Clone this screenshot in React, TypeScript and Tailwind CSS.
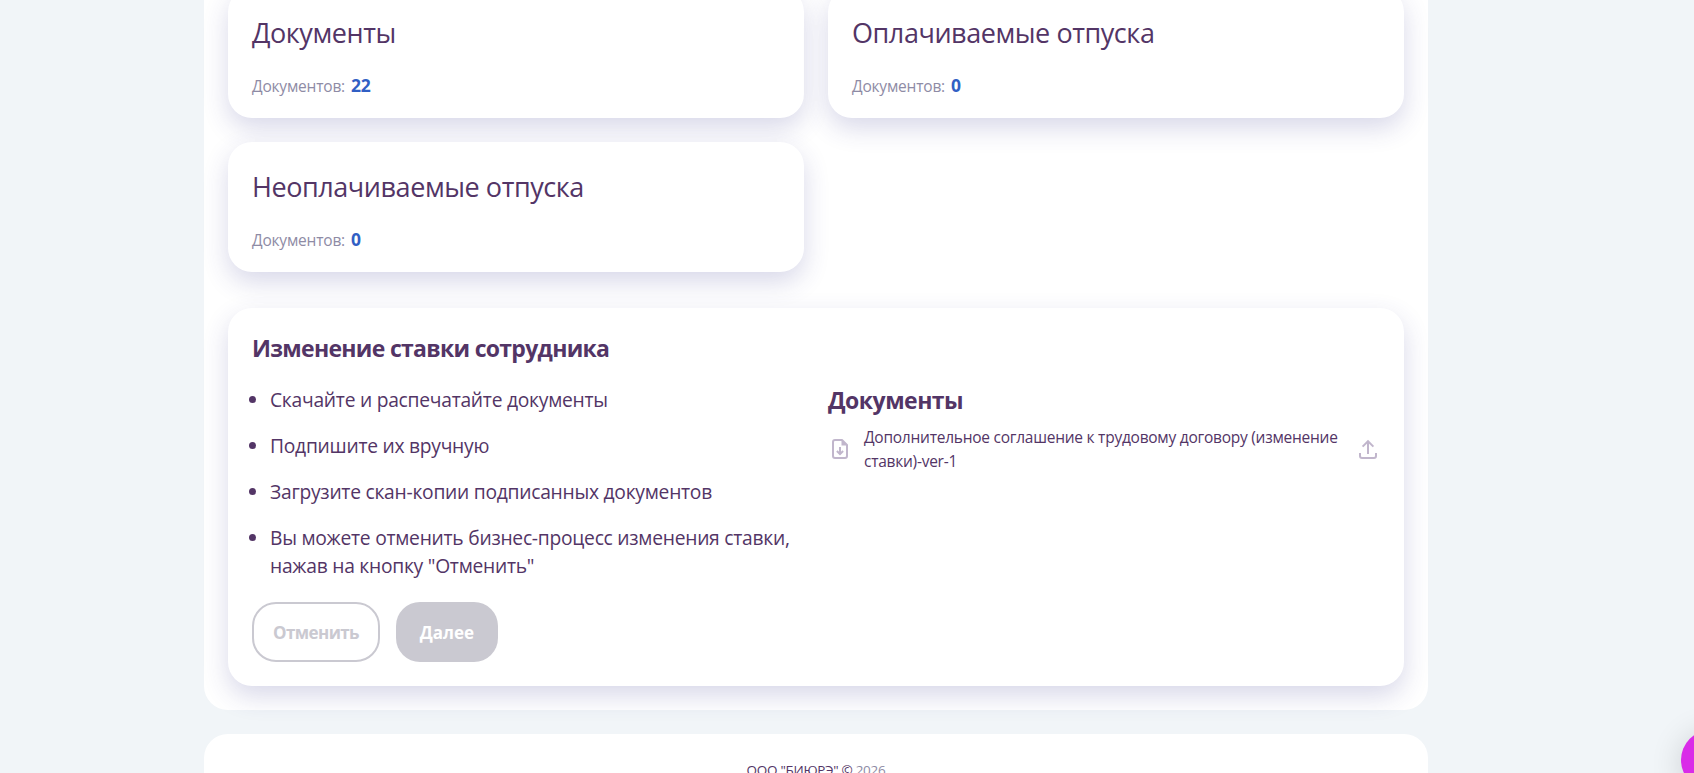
import cx from 'clsx';
import { FC, ReactNode } from 'react';

const categories = [
  { title: 'Документы', count: 22 },
  { title: 'Оплачиваемые отпуска', count: 0 },
  { title: 'Неоплачиваемые отпуска', count: 0 },
];

const steps = [
  'Скачайте и распечатайте документы',
  'Подпишите их вручную',
  'Загрузите скан-копии подписанных документов',
  'Вы можете отменить бизнес-процесс изменения ставки, нажав на кнопку "Отменить"',
];

const DownloadIcon: FC = () => (
  <svg className="shrink-0" width="24" height="24" viewBox="0 0 24 24" fill="none" stroke="#c1b6cc" strokeWidth="2">
    <path d="M14 3H7a2 2 0 0 0-2 2v14a2 2 0 0 0 2 2h10a2 2 0 0 0 2-2V8z" strokeLinejoin="round" />
    <path d="M13.5 2.5V8.5h6z" fill="#c1b6cc" stroke="none" />
    <path d="M12 10v7.5M8.9 14l3.1 3.1 3.1-3.1" />
  </svg>
);

const UploadIcon: FC = () => (
  <svg className="shrink-0" width="24" height="24" viewBox="0 0 24 24" fill="none" stroke="#c1b6cc" strokeWidth="2">
    <path d="M12 4v13M6.6 9.6L12 4.2l5.4 5.4" />
    <path d="M4 16v3a2 2 0 0 0 2 2h12a2 2 0 0 0 2-2v-3" />
  </svg>
);

const Card: FC<{ className?: string; children: ReactNode }> = ({ className, children }) => (
  <div className={cx('rounded-3xl bg-white px-6 shadow-[0_10px_26px_rgba(48,48,140,0.19)]', className)}>
    {children}
  </div>
);

export default function App() {
  return (
    <div className="relative h-[773px] overflow-hidden bg-[#f1f5f8] font-['Open_Sans','Noto_Sans',sans-serif] text-[#533566]">
      <div className="ml-[204px] w-[1224px]">
        <main className="flow-root h-[710px] rounded-b-3xl bg-white px-6">
          <div className="-mt-3 grid grid-cols-2 gap-6">
            {categories.map(({ title, count }) => (
              <Card key={title} className="h-[130px] pt-[23px]">
                <h2 className="text-[27px] leading-[44px] tracking-[-0.44px]">{title}</h2>
                <p className="mt-4 flex items-baseline gap-1.5 leading-7">
                  <span className="text-[15.5px] tracking-[-0.2px] text-[#8e8ba5]">Документов:</span>
                  <span className="text-[17.5px] font-bold tracking-[-0.2px] text-[#315fc4]">{count}</span>
                </p>
              </Card>
            ))}
          </div>

          <Card className="mt-9 h-[378px] pt-6">
            <h3 className="text-[23px] leading-8 font-bold tracking-[-0.7px]">Изменение ставки сотрудника</h3>
            <div className="grid grid-cols-2 gap-6 pt-[22px]">
              <div>
                <ul className="list-disc space-y-[18px] pl-[18px] text-[19.25px] leading-7 tracking-[-0.26px]">
                  {steps.map((step) => (
                    <li key={step}>{step}</li>
                  ))}
                </ul>
                <div className="mt-[22px] flex gap-4 text-[17px] font-bold">
                  <button className="h-[60px] w-32 rounded-3xl border-2 border-[#cac9d1] pt-0.5 tracking-[-0.6px] text-[#cac9d1]">
                    Отменить
                  </button>
                  <button className="h-[60px] w-[102px] rounded-3xl bg-[#cac9d1] pt-0.5 text-white">
                    Далее
                  </button>
                </div>
              </div>
              <div className="-mt-0.5">
                <h3 className="text-[23px] leading-8 font-bold tracking-[-0.5px]">Документы</h3>
                <div className="mt-2 flex items-center">
                  <DownloadIcon />
                  <p className="ml-3 flex-1 pt-px text-[15.5px] leading-6 tracking-[-0.25px]">
                    Дополнительное соглашение к трудовому договору (изменение ставки)-ver-1
                  </p>
                  <UploadIcon />
                </div>
              </div>
            </div>
          </Card>
        </main>

        <footer className="mt-6 h-24 rounded-t-3xl bg-white pt-6 text-center text-[13.5px] leading-6 tracking-[-0.3px]">
          ООО "БИЮРЭ" © <span className="text-[#8e8ba5]">2026</span>
        </footer>
      </div>

      {/* chat bubble */}
      <div className="absolute top-[730px] left-[1681px] size-[60px] rounded-full bg-[#d92be8] shadow-[0_4px_32px_rgba(0,0,0,0.16)]" />
    </div>
  );
}
